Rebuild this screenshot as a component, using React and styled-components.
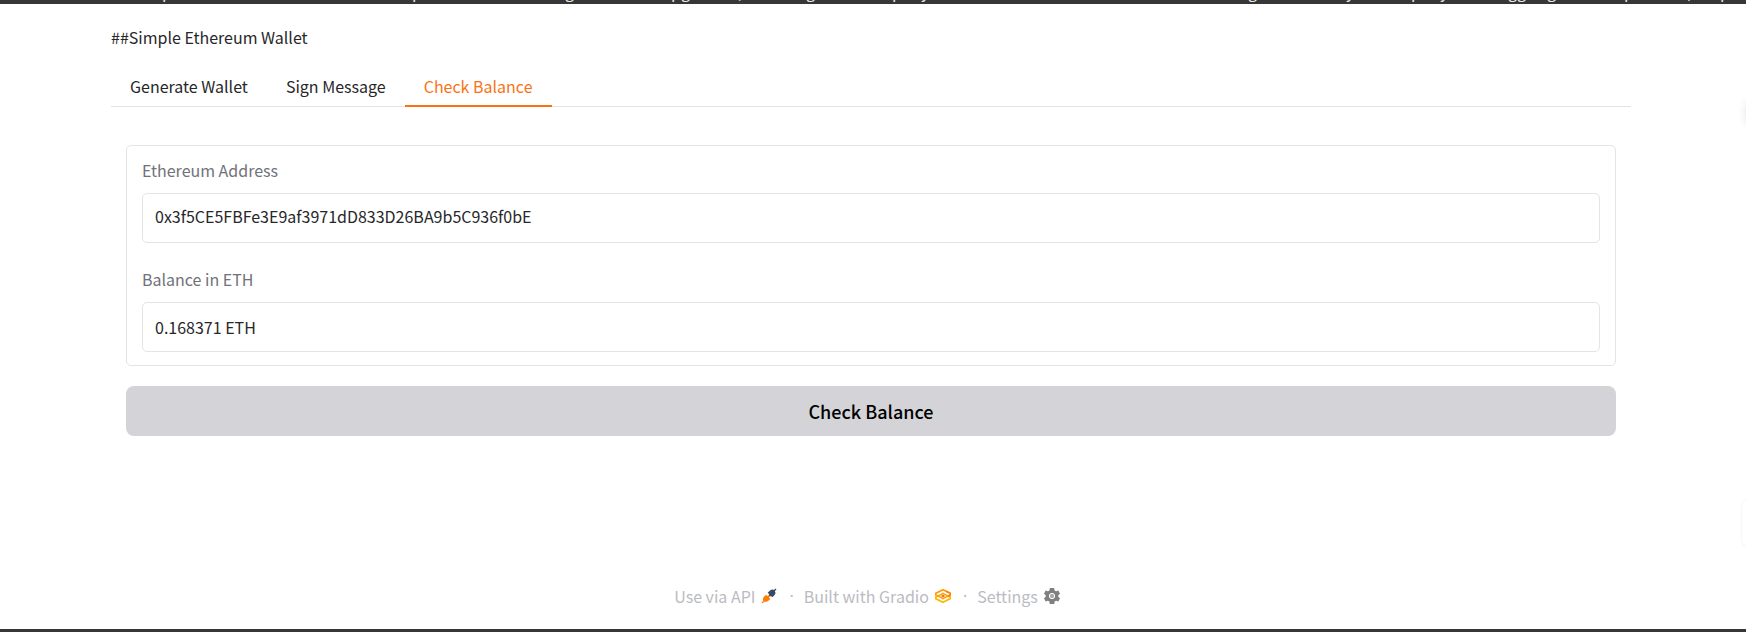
import React, { useState } from "react";
import styled, { createGlobalStyle } from "styled-components";

const GlobalStyle = createGlobalStyle`
  * { box-sizing: border-box; }
  body {
    margin: 0;
    background: #fff;
    color: #27272a;
    font-family: "Noto Sans CJK SC", "Noto Sans", sans-serif;
    font-size: 16px;
    line-height: 24px;
  }
  button, input { font: inherit; }
`;

const Page = styled.div`
  position: relative;
  min-height: 100vh;
  display: flex;
  flex-direction: column;
  overflow: hidden;
`;

const BrowserBar = styled.div`
  display: flex;
  align-items: flex-end;
  height: 4px;
  flex: none;
  overflow: hidden;
  padding-left: 162px;
  background: #373737;
  color: #e8e8e8;
  font-size: 16px;
  line-height: 16px;
  white-space: nowrap;
`;

const BarText = styled.span`
  flex: none;
  width: ${(p) => p.$span}px;
  height: 21px;
`;

const Main = styled.main`
  flex: 1;
  display: flex;
  flex-direction: column;
  padding: 21px 115px 21px 111px;
`;

const Title = styled.p`
  margin: 0;
`;

const TabList = styled.div`
  display: flex;
  margin-top: 18px;
  border-bottom: 1px solid #e4e4e7;
`;

const Tab = styled.button`
  height: 40px;
  margin-bottom: -1px;
  padding: 0 19px;
  border: 0;
  border-bottom: 2px solid ${(p) => (p.$active ? "#f97316" : "transparent")};
  background: none;
  color: ${(p) => (p.$active ? "#f97316" : "#27272a")};
`;

const Panel = styled.form`
  display: flex;
  flex-direction: column;
  gap: 20px;
  padding: 38px 15px 0;
`;

const FieldGroup = styled.div`
  display: flex;
  flex-direction: column;
  gap: 24px;
  padding: 12px 15px 13px;
  border: 1px solid #e4e4e7;
  border-radius: 5px;
`;

const Field = styled.label`
  display: flex;
  flex-direction: column;
  gap: 11px;
  color: #71717a;
`;

const TextBox = styled.input`
  width: 100%;
  height: 50px;
  padding: ${(p) => (p.readOnly ? "0 12px" : "0 12px 4px")};
  border: 1px solid #e4e4e7;
  border-radius: 5px;
  outline: 0;
  background: #fff;
  color: #27272a;
`;

const SubmitButton = styled.button`
  height: 50px;
  border: 0;
  border-radius: 8px;
  background: #d4d4d8;
  color: #000;
  font-size: 18px;
  font-weight: 500;
`;

const Footer = styled.footer`
  display: flex;
  justify-content: center;
  align-items: center;
  margin-top: auto;
  padding-right: 8px;
  color: #bbbbc2;
`;

const FooterLink = styled.a`
  display: flex;
  align-items: center;
  gap: 6px;
  color: inherit;
  text-decoration: none;
`;

const Dot = styled.span`
  margin: 0 10px 0 12px;
  font-family: "Noto Sans", sans-serif;
`;

const BottomEdge = styled.div`
  height: 3px;
  flex: none;
  background: #373739;
`;

const SideGlow = styled.div`
  position: absolute;
  top: 97px;
  right: -34px;
  width: 32px;
  height: 32px;
  border-radius: 16px;
  box-shadow: 0 0 12px rgba(0, 0, 0, 0.2);
`;

const SideHandle = styled.div`
  position: absolute;
  top: 500px;
  right: -32px;
  width: 36px;
  height: 46px;
  border-radius: 6px;
  background: #fff;
  box-shadow: 0 0 3px rgba(0, 0, 0, 0.08);
`;

const PlugIcon = () => (
  <svg width="16" height="16" viewBox="0 0 24 24" aria-hidden="true">
    <path d="M22.5 1.5 19 5" stroke="#3c4963" strokeWidth="2" />
    <path d="M10 7 14 3.500q3.500-2.500 6.500.500 2.500 3 0 6.500L17 14l-2-2-1.500.8-2-2 .9-1.500z" fill="#3c4963" />
    <path d="m7.500 10 2 2 1.800-1.300 2 2-1.300 1.800 2 2-3.300 3q-2.500 2-5 .7L2 23 1 22l2.500-3.500q-1.500-2.500.7-5z" fill="#ff7c00" />
  </svg>
);

const GradioIcon = () => (
  <svg width="16" height="16" viewBox="0 0 24 24" fill="none" strokeWidth="2.600" aria-hidden="true">
    <path d="M5.500 13 1.300 10.500V8L12 2.500 19 6" stroke="#ff9c00" />
    <path d="M18.500 11l4.200 2.500V16L12 21.500 5 18" stroke="#ffb700" />
    <path d="M17 5 22.700 8v2.500L18.500 13" stroke="#ff7c00" />
    <path d="M7 19 1.300 16v-2.500L5.500 11" stroke="#ffb700" />
    <path d="m12 8 7 4-7 4-7-4z" fill="#fff" stroke="#ff9c00" strokeWidth="2" />
    <ellipse cx="12" cy="12" rx="2.500" ry="1.800" fill="#f27800" />
  </svg>
);

const GearIcon = () => (
  <svg width="16" height="16" viewBox="0 0 24 24" aria-hidden="true">
    <path
      fill="#808080"
      d="M8.800 0h6.400l.7 3.700 2.200 1.200 3.500-1.300L24 8.700l-2.600 2.200v2.200l2.600 2.200-2.400 5.100-3.500-1.300-2.200 1.200-.7 5.200H8.800l-.7-5.200-2.200-1.200-3.500 1.300L0 15.300l2.600-2.200v-2.200L0 8.700l2.400-5.100 3.500 1.300 2.200-1.200z"
    />
    <circle cx="12" cy="12" r="4" fill="#aaa" stroke="#fff" strokeWidth="1.500" />
  </svg>
);

const barTexts = [
  ["p", 250], ["p", 153], ["g", 106], ["pg", 67], [",", 68], ["g", 86], ["p", 29], ["y", 327],
  ["g", 98], ["y", 65], ["p", 29], ["y", 68], ["gg", 39], ["g", 77], ["p", 61], ["(", 35], ["p", 20],
];

const tabs = ["Generate Wallet", "Sign Message", "Check Balance"];

export default function App() {
  const [active, setActive] = useState(2);
  const [address, setAddress] = useState("0x3f5CE5FBFe3E9af3971dD833D26BA9b5C936f0bE");
  return (
    <>
      <GlobalStyle />
      <Page>
        <BrowserBar aria-hidden="true">
          {barTexts.map(([text, span], i) => (
            <BarText key={i} $span={span}>{text}</BarText>
          ))}
        </BrowserBar>
        <Main>
          <Title>##Simple Ethereum Wallet</Title>
          <TabList role="tablist">
            {tabs.map((name, i) => (
              <Tab key={name} type="button" role="tab" aria-selected={i === active} $active={i === active} onClick={() => setActive(i)}>
                {name}
              </Tab>
            ))}
          </TabList>
          <Panel onSubmit={(e) => e.preventDefault()}>
            <FieldGroup>
              <Field>
                Ethereum Address
                <TextBox type="text" spellCheck={false} value={address} onChange={(e) => setAddress(e.target.value)} />
              </Field>
              <Field>
                Balance in ETH
                <TextBox type="text" readOnly value="0.168371 ETH" />
              </Field>
            </FieldGroup>
            <SubmitButton type="submit">Check Balance</SubmitButton>
          </Panel>
          <Footer>
            <FooterLink href="#api">Use via API <PlugIcon /></FooterLink>
            <Dot>·</Dot>
            <FooterLink href="#gradio">Built with Gradio <GradioIcon /></FooterLink>
            <Dot>·</Dot>
            <FooterLink href="#settings">Settings <GearIcon /></FooterLink>
          </Footer>
        </Main>
        <BottomEdge />
        <SideGlow />
        <SideHandle />
      </Page>
    </>
  );
}
